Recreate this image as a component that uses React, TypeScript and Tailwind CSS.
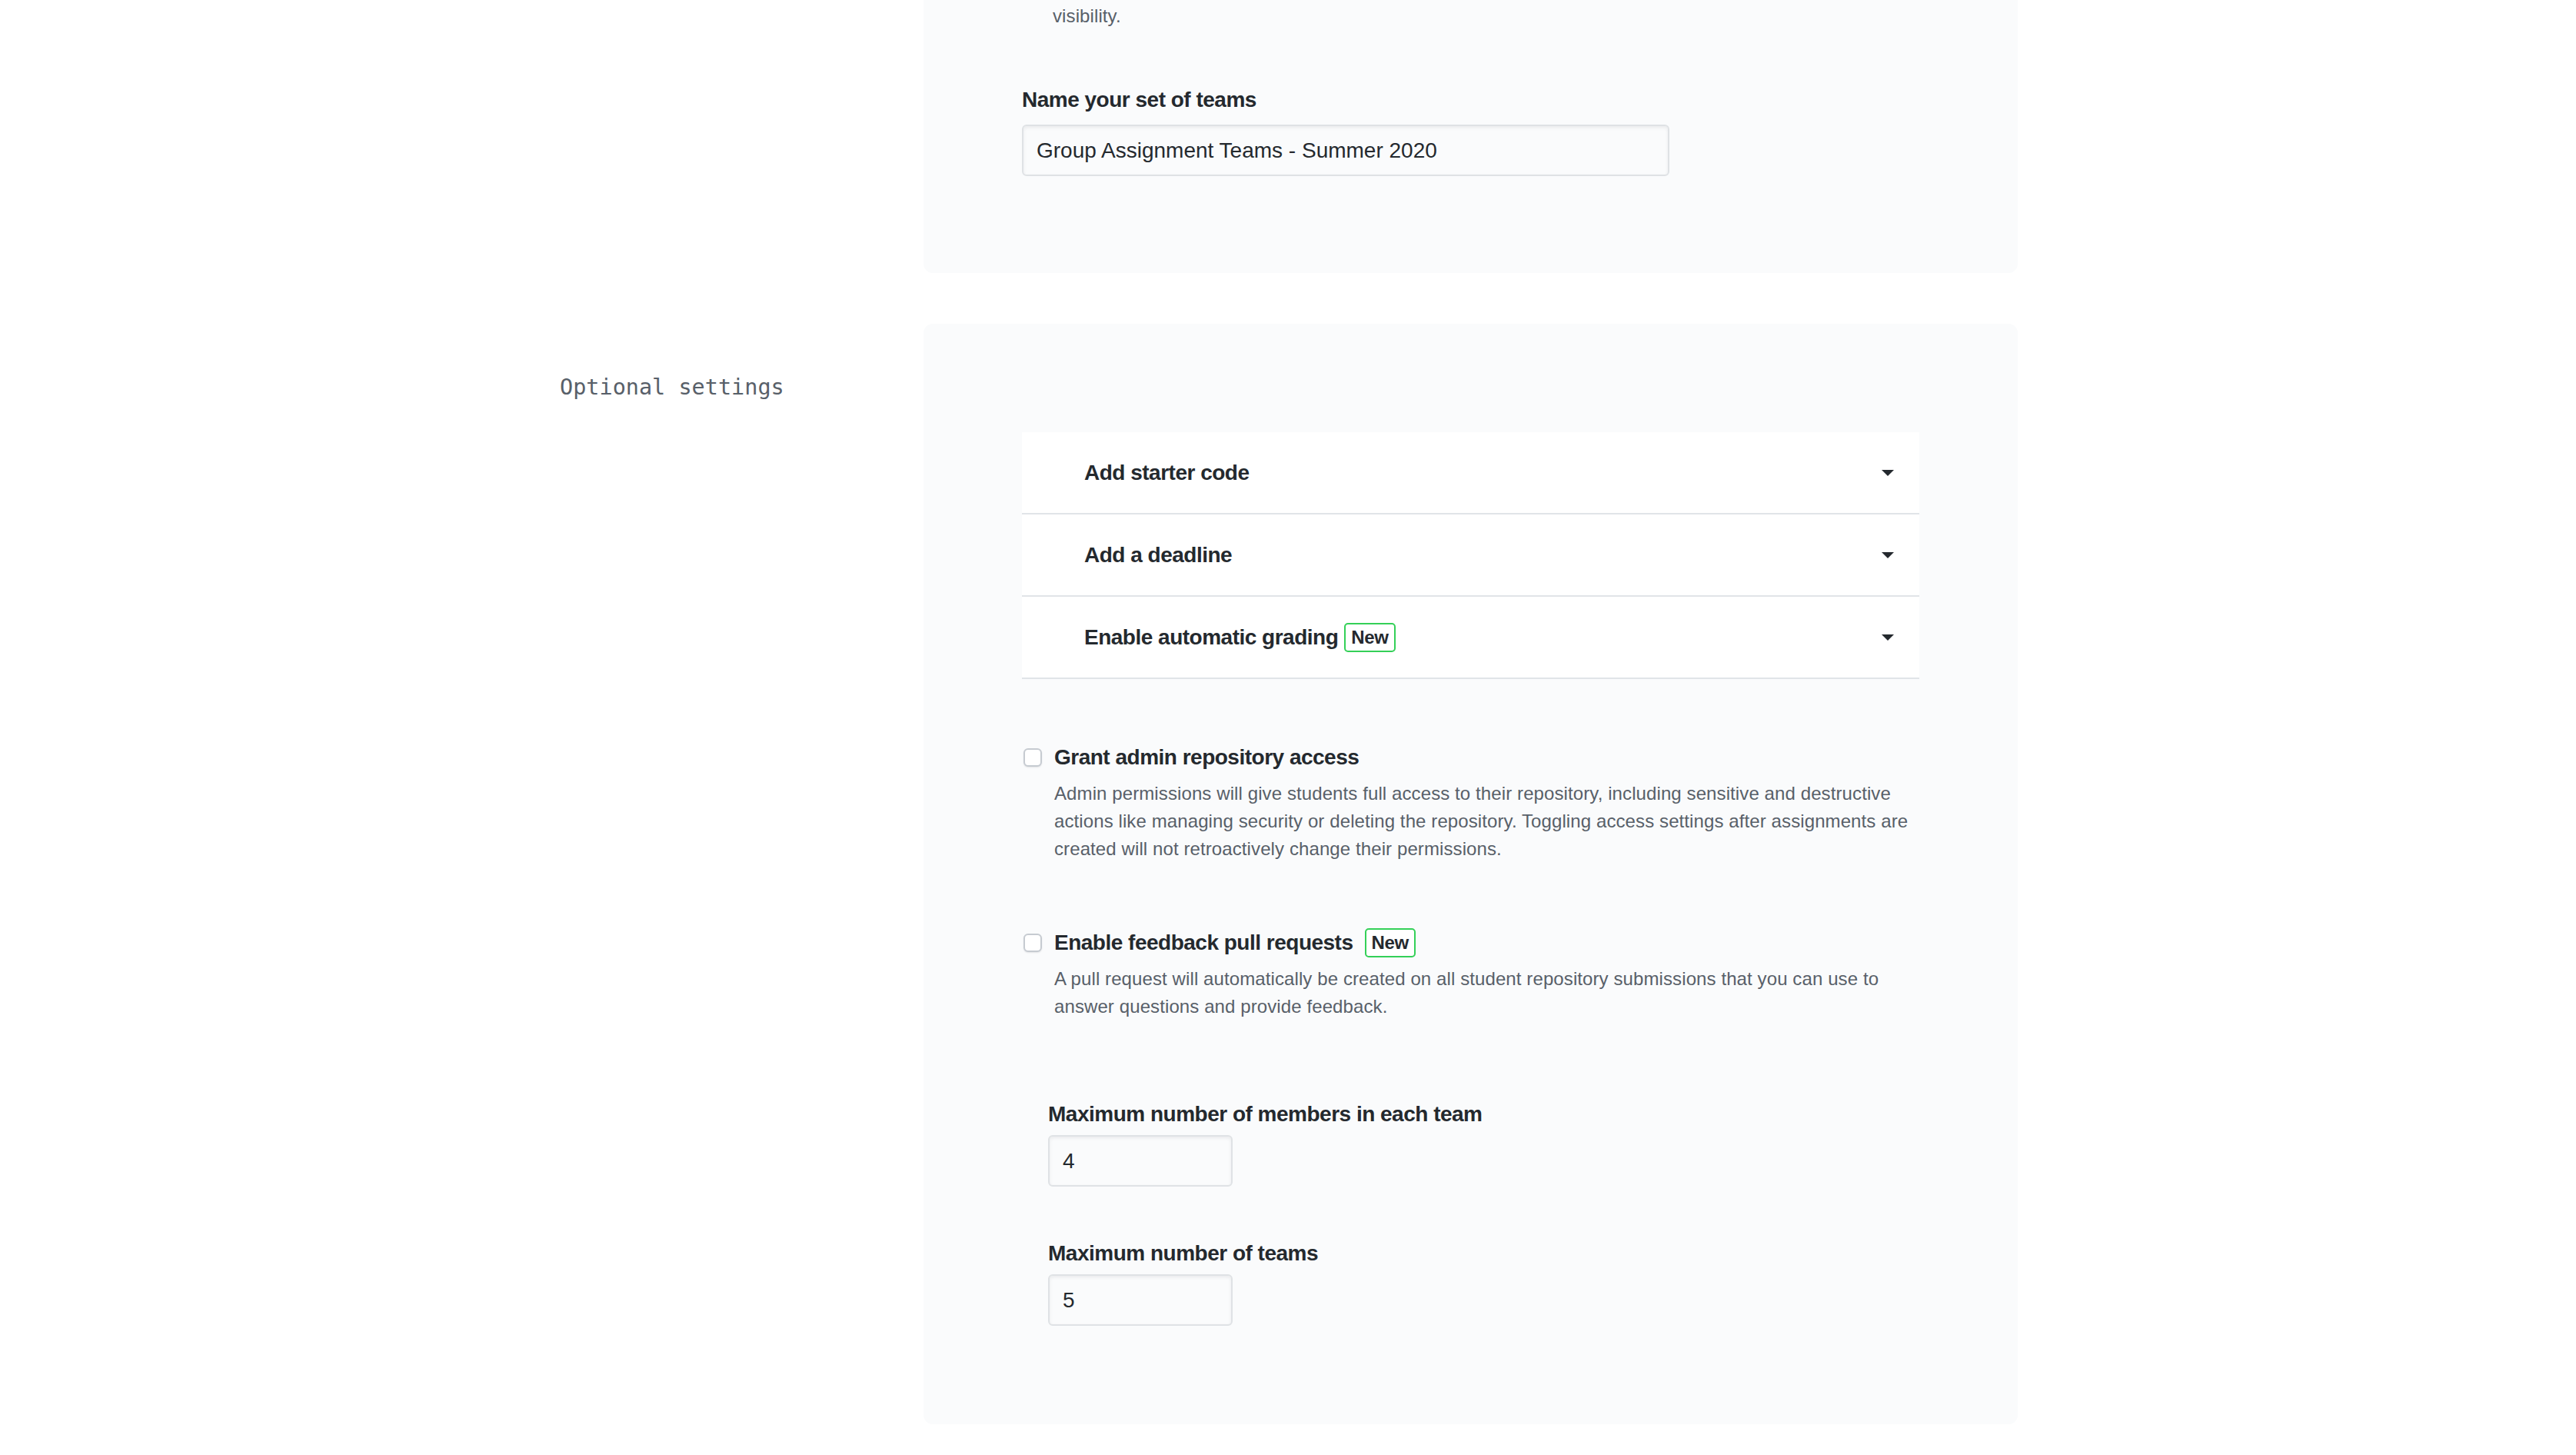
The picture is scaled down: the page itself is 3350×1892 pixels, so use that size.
import { useState } from "react";

const labelClass = "text-[28px] leading-[42px] font-bold tracking-[-0.5px] text-[#24292e]";
const descClass = "text-[24px] leading-[36px] tracking-[0.1px] text-[#586069]";
const inputClass =
  "h-[67px] rounded-[6px] border-2 border-[#dfe2e5] bg-[#fafbfc] px-[17px] text-[28px] text-[#24292e] shadow-[inset_0_2px_4px_rgba(27,31,35,0.075)] outline-none";

function NewBadge({ className = "" }: { className?: string }) {
  return (
    <span
      className={
        "inline-flex h-[38px] items-center rounded-[5px] border-2 border-[#34d058] bg-white px-[7px] text-[24px] font-bold tracking-[-0.3px] text-[#24292e] " +
        className
      }
    >
      New
    </span>
  );
}

function AccordionRow({ title, badge }: { title: string; badge?: boolean }) {
  return (
    <button className="flex h-[107px] w-full items-center justify-between border-b-2 border-[#e1e4e8] bg-white pl-[81px] pr-[33px] text-left">
      <span className="flex items-center">
        <span className={labelClass}>{title}</span>
        {badge && <NewBadge className="ml-[8px]" />}
      </span>
      <span className="h-0 w-0 border-x-[8px] border-t-[8px] border-x-transparent border-t-[#24292e]" />
    </button>
  );
}

function CheckOption({
  title,
  lines,
  badge,
}: {
  title: string;
  lines: string[];
  badge?: boolean;
}) {
  const [checked, setChecked] = useState(false);
  return (
    <div className="flex">
      <div className="flex h-[42px] w-[42px] shrink-0 items-center">
        <input
          type="checkbox"
          checked={checked}
          onChange={(e) => setChecked(e.target.checked)}
          className="ml-[2px] h-[24px] w-[24px] appearance-none rounded-[6px] border-2 border-[#c6cbd1] bg-white shadow-[0_1px_2px_rgba(27,31,35,0.1)]"
        />
      </div>
      <div className="flex flex-col">
        <div className="flex items-center">
          <span className={labelClass}>{title}</span>
          {badge && <NewBadge className="ml-[15px]" />}
        </div>
        <p className={descClass + " mt-[8px]"}>
          {lines.map((line, i) => (
            <span key={i} className="block whitespace-nowrap">
              {line}
            </span>
          ))}
        </p>
      </div>
    </div>
  );
}

export default function App() {
  const [teamSetName, setTeamSetName] = useState("Group Assignment Teams - Summer 2020");
  const [maxMembers, setMaxMembers] = useState("4");
  const [maxTeams, setMaxTeams] = useState("5");

  return (
    <div className="min-h-screen bg-white font-['Liberation_Sans',Arial,sans-serif]">
      <div className="ml-[728px] flex flex-col">
        {/* Team set section */}
        <div className="flex">
          <div className="w-[473px] shrink-0" />
          <div className="w-[1423px] rounded-b-[12px] bg-[#fafbfc] px-[128px] pt-[3px] pb-[126px]">
            <p className={descClass + " ml-[40px]"}>visibility.</p>
            <label className={labelClass + " mt-[70px] block"}>Name your set of teams</label>
            <input
              type="text"
              value={teamSetName}
              onChange={(e) => setTeamSetName(e.target.value)}
              className={inputClass + " mt-[11px] w-[842px]"}
            />
          </div>
        </div>

        {/* Optional settings */}
        <div className="mt-[66px] flex">
          <div className="w-[473px] shrink-0 pt-[62px]">
            <h2 className="font-['DejaVu_Sans_Mono',monospace] text-[28.5px] leading-[42px] text-[#586069]">
              Optional settings
            </h2>
          </div>
          <div className="w-[1423px] rounded-[12px] bg-[#fafbfc] px-[128px] pt-[141px] pb-[128px]">
            <div className="flex flex-col">
              <AccordionRow title="Add starter code" />
              <AccordionRow title="Add a deadline" />
              <AccordionRow title="Enable automatic grading" badge />
            </div>

            <div className="mt-[81px]">
              <CheckOption
                title="Grant admin repository access"
                lines={[
                  "Admin permissions will give students full access to their repository, including sensitive and destructive",
                  "actions like managing security or deleting the repository. Toggling access settings after assignments are",
                  "created will not retroactively change their permissions.",
                ]}
              />
            </div>

            <div className="mt-[83px]">
              <CheckOption
                title="Enable feedback pull requests"
                badge
                lines={[
                  "A pull request will automatically be created on all student repository submissions that you can use to",
                  "answer questions and provide feedback.",
                ]}
              />
            </div>

            <div className="ml-[34px] mt-[101px] flex flex-col">
              <label className={labelClass}>Maximum number of members in each team</label>
              <input
                type="text"
                value={maxMembers}
                onChange={(e) => setMaxMembers(e.target.value)}
                className={inputClass + " mt-[6px] w-[240px]"}
              />
              <label className={labelClass + " mt-[66px]"}>Maximum number of teams</label>
              <input
                type="text"
                value={maxTeams}
                onChange={(e) => setMaxTeams(e.target.value)}
                className={inputClass + " mt-[6px] w-[240px]"}
              />
            </div>
          </div>
        </div>
      </div>
    </div>
  );
}
